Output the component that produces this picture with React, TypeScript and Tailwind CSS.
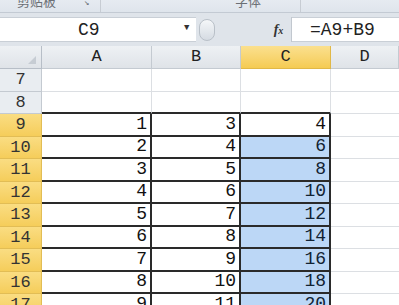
import React from 'react';

const rows = [
  { n: 7, a: '', b: '', c: '' },
  { n: 8, a: '', b: '', c: '' },
  { n: 9, a: '1', b: '3', c: '4' },
  { n: 10, a: '2', b: '4', c: '6' },
  { n: 11, a: '3', b: '5', c: '8' },
  { n: 12, a: '4', b: '6', c: '10' },
  { n: 13, a: '5', b: '7', c: '12' },
  { n: 14, a: '6', b: '8', c: '14' },
  { n: 15, a: '7', b: '9', c: '16' },
  { n: 16, a: '8', b: '10', c: '18' },
  { n: 17, a: '9', b: '11', c: '20' },
];

const mono = { fontFamily: '"Liberation Mono", "DejaVu Sans Mono", monospace' };

const Cell = ({
  value,
  data,
  above,
  fill,
}: {
  value: string;
  data: boolean;
  above: boolean;
  fill: string;
}) => (
  <div
    className={`flex items-end justify-end pr-[3px] pb-[2px] text-[18px] leading-none text-[#111] ${fill} ${
      data ? 'border-r-2 border-r-[#2a2a2a]' : 'border-r border-r-[#dcdfe3]'
    } ${data || above ? 'border-b-2 border-b-[#2a2a2a]' : 'border-b border-b-[#dcdfe3]'}`}
  >
    {value}
  </div>
);

export default function App() {
  return (
    <div className="w-[399px] h-[305px] overflow-hidden bg-white" style={mono}>
      {/* ribbon bottom strip */}
      <div className="h-[13px] flex bg-gradient-to-b from-[#e6ebf1] to-[#dfe5ec] border-b border-[#c3cad3] overflow-hidden text-[#6b6f75]">
        <div className="w-[101px] border-r border-[#c7ccd3] flex relative">
          <span
            className="absolute left-[17px] top-[-6px] text-[13px] leading-none"
            style={{ fontFamily: '"Noto Sans CJK SC", sans-serif' }}
          >
            剪贴板
          </span>
          <span className="absolute left-[84px] top-[-1px] text-[9px] leading-none">↘</span>
        </div>
        <div className="flex-1 relative border-r border-[#c7ccd3] mr-[98px]">
          <span
            className="absolute left-[134px] top-[-6px] text-[13px] leading-none"
            style={{ fontFamily: '"Noto Sans CJK SC", sans-serif' }}
          >
            字体
          </span>
        </div>
      </div>

      {/* formula bar */}
      <div className="h-[33px] bg-[#dfe4ea] pt-[4px] pb-[3px] flex">
        <div className="w-[196px] h-[25px] bg-white border-y border-[#c9cfd6] flex items-center relative">
          <span className="absolute left-[78px] top-[3px] text-[18px] leading-none text-[#222]">C9</span>
          <span className="absolute left-[184px] top-[6px] text-[9px] leading-none text-[#333]">▼</span>
        </div>
        <div className="w-[70px] h-[25px] flex items-center">
          <div className="ml-[3px] w-[16px] h-[22px] rounded-full bg-gradient-to-b from-[#f5f7f9] to-[#d5dbe2] border border-[#b9c0c8]" />
        </div>
        <div className="w-[26px] h-[25px] flex items-center justify-center border-r border-[#c2c8cf]">
          <span
            className="text-[14px] italic font-bold text-[#333]"
            style={{ fontFamily: '"Liberation Serif", serif' }}
          >
            f<span className="text-[10px]">x</span>
          </span>
        </div>
        <div className="flex-1 h-[25px] bg-white border-y border-[#c9cfd6] relative">
          <span className="absolute left-[18px] top-[3px] text-[18px] leading-none text-[#222]">=A9+B9</span>
        </div>
      </div>

      {/* grid */}
      <div className="grid grid-cols-[42px_110px_89px_90px_68px]">
        {/* header */}
        <div className="h-[23px] bg-gradient-to-b from-[#eef1f4] to-[#dfe3e8] border-r border-b border-[#b7bec7] relative">
          <span className="absolute right-[5px] bottom-[4px] w-0 h-0 border-l-[8px] border-l-transparent border-b-[8px] border-b-[#c6ccd3]" />
        </div>
        {['A', 'B', 'C', 'D'].map((c) => (
          <div
            key={c}
            className={`h-[23px] flex items-center justify-center text-[17px] text-[#222] border-r border-b ${
              c === 'C'
                ? 'bg-gradient-to-b from-[#fbe08e] to-[#f5cb52] border-[#e1b847]'
                : 'bg-gradient-to-b from-[#eef1f4] to-[#dfe3e8] border-[#c4cad1]'
            }`}
          >
            {c}
          </div>
        ))}
        {rows.map((r, i) => {
          const data = r.n >= 9;
          const h = i % 2 === 0 ? 'h-[23px]' : 'h-[22px]';
          const above = r.n === 8;
          return (
            <React.Fragment key={r.n}>
              <div
                className={`${h} flex items-center justify-center text-[17px] text-[#333] border-r border-b ${
                  data
                    ? 'bg-gradient-to-b from-[#fadd82] to-[#f5cd5a] border-[#e2bd55] text-[#4a3a10]'
                    : 'bg-[#e9edf1] border-[#c4cad1]'
                }`}
              >
                {r.n}
              </div>
              <Cell value={r.a} data={data} above={above} fill="bg-white" />
              <Cell value={r.b} data={data} above={above} fill="bg-white" />
              <Cell
                value={r.c}
                data={data}
                above={above}
                fill={data && r.n > 9 ? 'bg-[#bcd7f6] text-[#123]' : 'bg-white'}
              />
              <div className={`${h} bg-white border-b border-[#dcdfe3]`} />
            </React.Fragment>
          );
        })}
      </div>
    </div>
  );
}
